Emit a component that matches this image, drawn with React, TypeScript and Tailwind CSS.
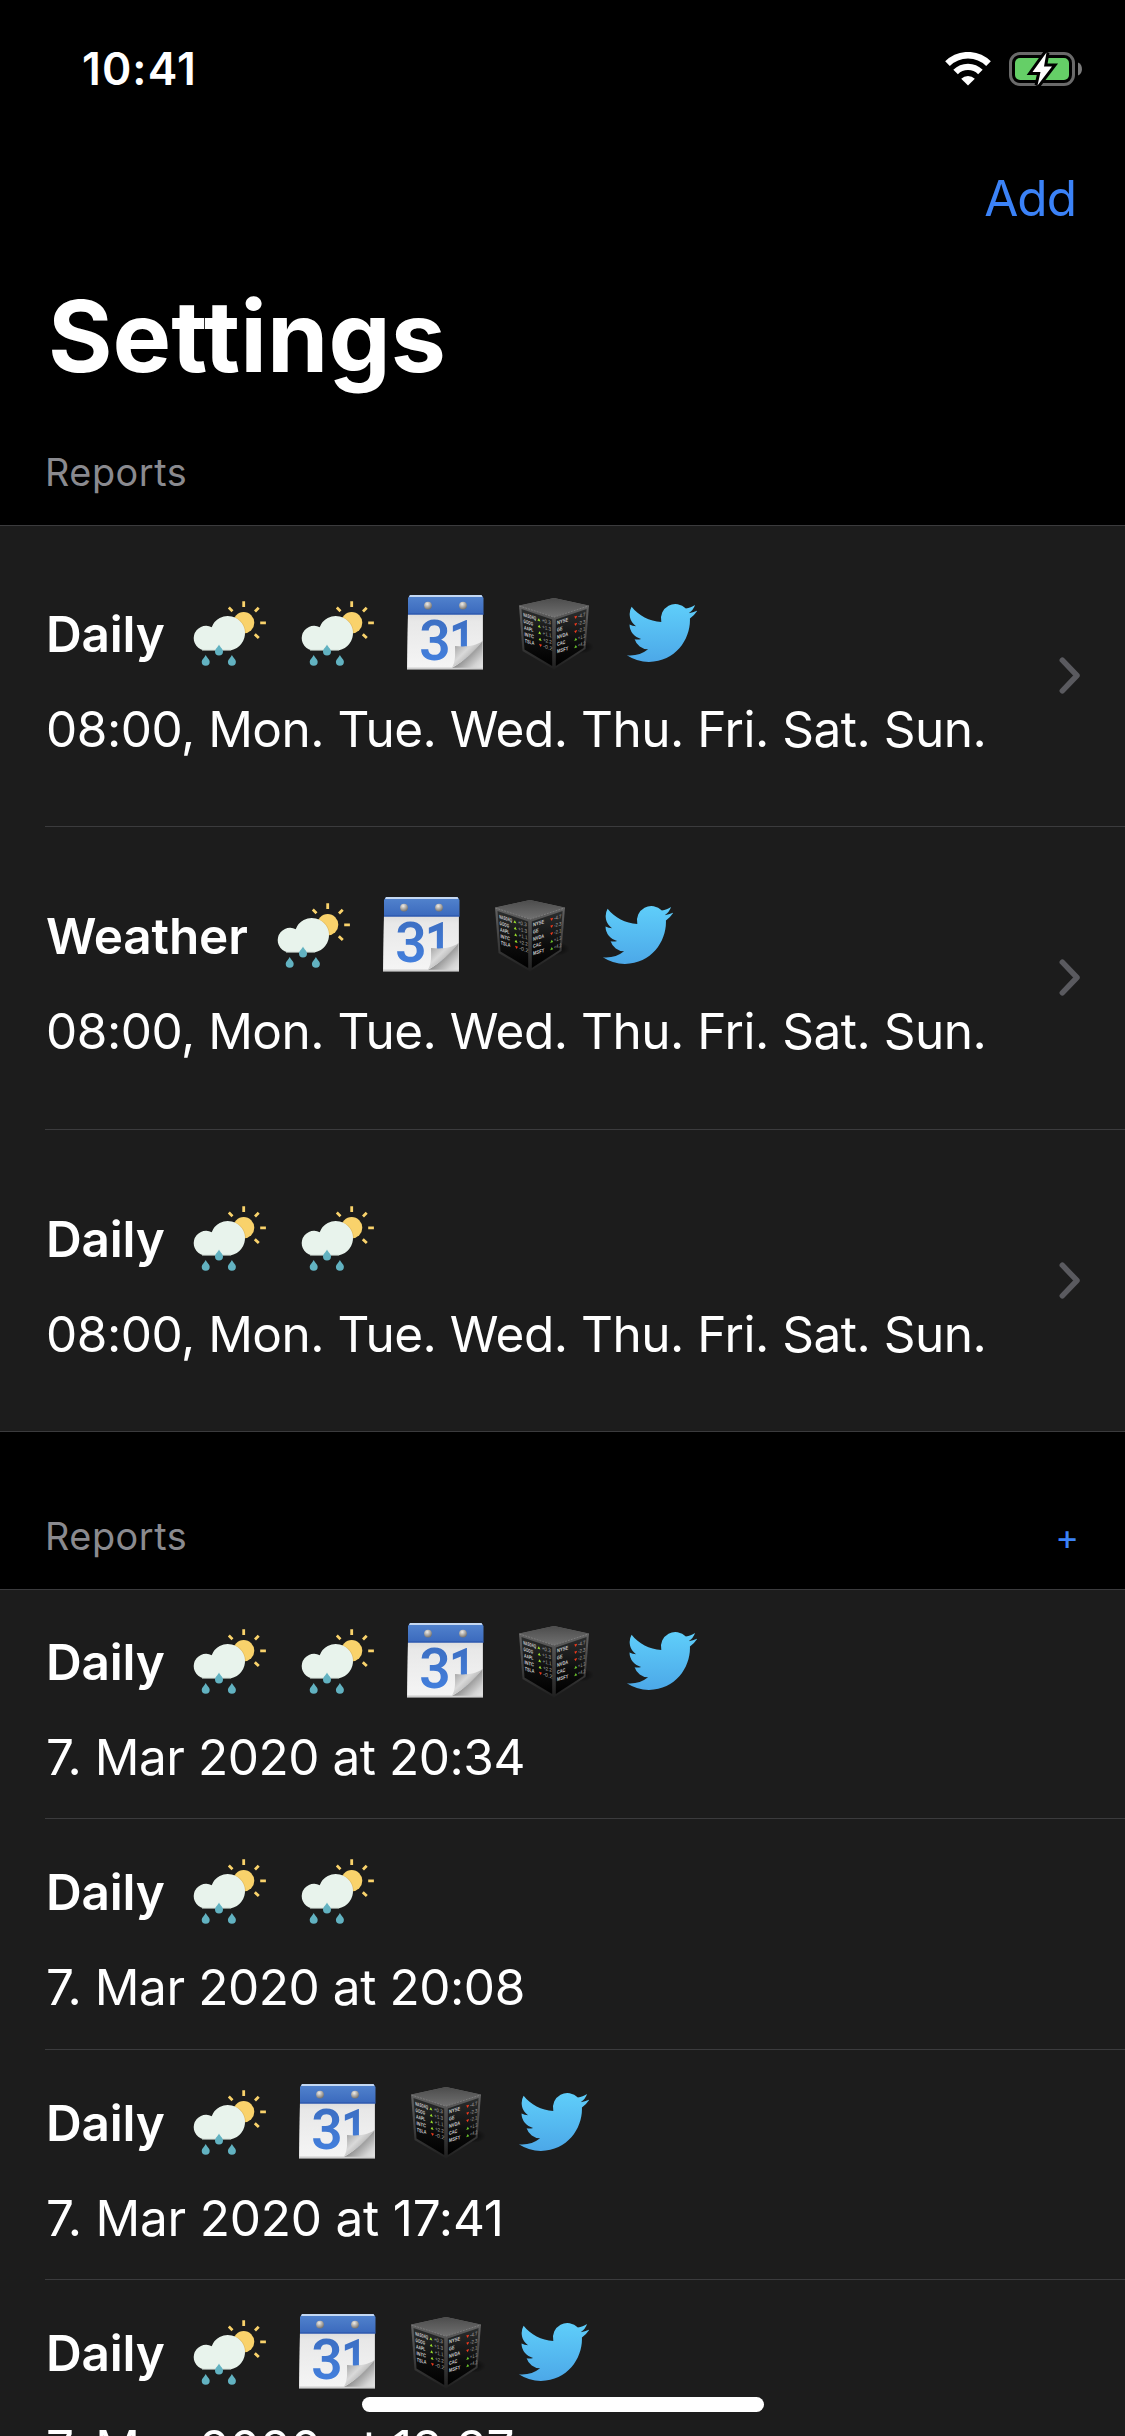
type IconName = 'weather' | 'calendar' | 'stocks' | 'twitter';

type Report = {
  title: string;
  titleClass: string;
  icons: IconName[];
  detail: string;
  detailClass: string;
  heightClass: string;
};

const DAILY = 'w-[119px] tracking-[-0.2px]';
const WEATHER = 'w-[203px] tracking-[-0.2px]';
const SCHEDULE = '08:00, Mon. Tue. Wed. Thu. Fri. Sat. Sun.';

const schedules: Report[] = [
  { title: 'Daily', titleClass: DAILY, icons: ['weather', 'weather', 'calendar', 'stocks', 'twitter'], detail: SCHEDULE, detailClass: 'tracking-[-0.48px]', heightClass: 'h-[302px]' },
  { title: 'Weather', titleClass: WEATHER, icons: ['weather', 'calendar', 'stocks', 'twitter'], detail: SCHEDULE, detailClass: 'tracking-[-0.48px]', heightClass: 'h-[303px]' },
  { title: 'Daily', titleClass: DAILY, icons: ['weather', 'weather'], detail: SCHEDULE, detailClass: 'tracking-[-0.48px]', heightClass: 'h-[302px]' },
];

const history: Report[] = [
  { title: 'Daily', titleClass: DAILY, icons: ['weather', 'weather', 'calendar', 'stocks', 'twitter'], detail: '7. Mar 2020 at 20:34', detailClass: 'tracking-[-0.45px]', heightClass: 'h-[230px]' },
  { title: 'Daily', titleClass: DAILY, icons: ['weather', 'weather'], detail: '7. Mar 2020 at 20:08', detailClass: 'tracking-[-0.42px]', heightClass: 'h-[231px]' },
  { title: 'Daily', titleClass: DAILY, icons: ['weather', 'calendar', 'stocks', 'twitter'], detail: '7. Mar 2020 at 17:41', detailClass: 'tracking-[-0.2px]', heightClass: 'h-[230px]' },
  { title: 'Daily', titleClass: DAILY, icons: ['weather', 'calendar', 'stocks', 'twitter'], detail: '7. Mar 2020 at 18:37', detailClass: 'tracking-[-0.25px]', heightClass: 'h-[230px]' },
];

function WeatherIcon() {
  return (
    <svg width="84" height="84" viewBox="0 0 84 84">
      <clipPath id="sun-disc"><circle cx="55.7" cy="31.7" r="10.6" /></clipPath>
      <circle cx="55.7" cy="31.7" r="10.6" fill="#f9d26b" />
      <path d="M55.7 10.2v5.8M40.8 16.600l3.700 3.600M67 20.400l3.700-3.700M72.200 31.900h5.700M66.800 43.200l4 3.900" stroke="#f9d26b" strokeWidth="2.800" fill="none" />
      <circle cx="39.600" cy="42.800" r="18.300" fill="#e2b95c" clipPath="url(#sun-disc)" />
      <path d="M18 59.400a12.300 12.300 0 1 1 5.700-23.200A17.200 17.200 0 1 1 40 59.400z" fill="#e8f3ec" />
      <path d="M14 59.400h29" stroke="#8b938e" strokeWidth="1" />
      <g fill="#62b2c1">
        <path d="M31 53.600c1 2.600 4 4.300 4 7a4 4 0 0 1-8 0c0-2.700 3-4.400 4-7z" />
        <path d="M17.700 64c1 2.600 4 4.300 4 6.800a4 4 0 0 1-8 0c0-2.500 3-4.200 4-6.800z" />
        <path d="M43.900 64c1 2.600 4 4.300 4 6.800a4 4 0 0 1-8 0c0-2.500 3-4.200 4-6.800z" />
      </g>
    </svg>
  );
}

function CalendarIcon() {
  return (
    <svg width="84" height="84" viewBox="0 0 84 84">
      <defs>
        <linearGradient id="cal-head" x1="0" y1="0" x2="0" y2="1">
          <stop offset="0" stopColor="#5384ce" />
          <stop offset="1" stopColor="#3a69bd" />
        </linearGradient>
        <linearGradient id="cal-page" x1="0" y1="0" x2="0" y2="1">
          <stop offset="0" stopColor="#dcdcdc" />
          <stop offset="0.15" stopColor="#e8e8e8" />
          <stop offset="1" stopColor="#f5f5f5" />
        </linearGradient>
        <linearGradient id="cal-num" x1="0" y1="0" x2="0" y2="1">
          <stop offset="0" stopColor="#3b6bbd" />
          <stop offset="1" stopColor="#4584e4" />
        </linearGradient>
        <linearGradient id="cal-flap" x1="52" y1="54" x2="66" y2="68" gradientUnits="userSpaceOnUse">
          <stop offset="0" stopColor="#a9a9a9" />
          <stop offset="0.55" stopColor="#d9d9d9" />
          <stop offset="0.8" stopColor="#c4c4c4" />
          <stop offset="1" stopColor="#8c8c8c" />
        </linearGradient>
        <linearGradient id="cal-under" x1="62" y1="64" x2="78" y2="80" gradientUnits="userSpaceOnUse">
          <stop offset="0" stopColor="#8f8f8f" />
          <stop offset="0.6" stopColor="#d4d4d4" />
          <stop offset="1" stopColor="#e9e9e9" />
        </linearGradient>
        <radialGradient id="cal-pin" cx="0.4" cy="0.3" r="0.7">
          <stop offset="0" stopColor="#f0eeea" />
          <stop offset="1" stopColor="#77736e" />
        </radialGradient>
      </defs>
      <path d="M4 22h75v56.5H3z" fill="#bdbdbd" />
      <path d="M4 22h74.5v54.8H3.2z" fill="url(#cal-page)" />
      <path d="M6 4h71.5l2 3v16.5H4V7z" fill="url(#cal-head)" />
      <path d="M6 4h71.5l1 2H5z" fill="#c4d8f2" />
      <path d="M4 23h75.6" stroke="#2750a8" strokeWidth="1.2" />
      <circle cx="24" cy="14.6" r="3.9" fill="url(#cal-pin)" />
      <circle cx="59" cy="14.6" r="3.9" fill="url(#cal-pin)" />
      <g fontFamily="Roboto" fontWeight="600" fontSize="55" fill="url(#cal-num)">
        <text transform="translate(15.3 69)">3</text>
        <text transform="translate(45 69) scale(0.85 1)">1</text>
      </g>
      <path d="M78.5 50C70 60 60 70 48 77h30.5z" fill="url(#cal-under)" />
      <path d="M51 55c10 1 20 .5 27.5-5C71 60 61 70 48 76.5c4-6 3-15 3-21.5z" fill="url(#cal-flap)" />
      <path d="M3 77.5h76" stroke="#cfcfcf" strokeWidth="1.5" />
    </svg>
  );
}

const leftQuotes = [
  { name: 'NASDAQ', value: '+0.3', up: true },
  { name: 'GOOG', value: '+1.3', up: true },
  { name: 'AAPL', value: '+1.1', up: true },
  { name: 'INTC', value: '+2.2', up: true },
  { name: 'TSLA', value: '-0.2', up: false },
];

const rightQuotes = [
  { name: 'NYSE', value: '-4.7', up: false },
  { name: 'GE', value: '-2.3', up: false },
  { name: 'NVDA', value: '-2.1', up: false },
  { name: 'CAC', value: '+1.3', up: true },
  { name: 'MSFT', value: '+4.2', up: true },
];

function StocksIcon() {
  return (
    <svg width="84" height="84" viewBox="0 0 84 84">
      <defs>
        <linearGradient id="cube-top" x1="0" y1="0" x2="0" y2="1">
          <stop offset="0" stopColor="#4c4c4c" />
          <stop offset="1" stopColor="#707070" />
        </linearGradient>
        <linearGradient id="cube-frame" x1="0" y1="0" x2="0" y2="1">
          <stop offset="0" stopColor="#6a6a6a" />
          <stop offset="1" stopColor="#1f1f1f" />
        </linearGradient>
        <linearGradient id="cube-face" x1="0" y1="0" x2="0" y2="1">
          <stop offset="0" stopColor="#2c2e2e" />
          <stop offset="0.6" stopColor="#0c0c0c" />
          <stop offset="1" stopColor="#000" />
        </linearGradient>
        <radialGradient id="cube-shadow">
          <stop offset="0" stopColor="#000" stopOpacity="0.8" />
          <stop offset="1" stopColor="#000" stopOpacity="0" />
        </radialGradient>
      </defs>
      <ellipse cx="68" cy="56" rx="14" ry="7" fill="url(#cube-shadow)" />
      <path d="M7 14.5L42 7l35 7.5L73.5 58 42 78.5 10.5 60z" fill="url(#cube-frame)" />
      <path d="M8 14.5L42 7l34 7.500L42 26z" fill="url(#cube-top)" />
      <path d="M7.500 15L42 26.200 76.500 15" stroke="#8a8a8a" strokeWidth="0.7" fill="none" strokeDasharray="2 1" />
      <path d="M9.500 18L40.200 28.500V75L12.500 58.500z" fill="url(#cube-face)" />
      <path d="M43.800 28.500L74.600 18 71.600 57 43.800 75z" fill="url(#cube-face)" />
      <g fontFamily="Liberation Sans" fontSize="5.2" fill="#d2d2d2">
        {leftQuotes.map((q, i) => (
          <g key={q.name} transform={`matrix(1 0.3 0 1 ${11.2 + i * 0.4} ${25.3 + i * 6.5})`}>
            <text x="0" y="0" fontWeight="700" textLength={i === 0 ? 13 : 9.5} lengthAdjust="spacingAndGlyphs">{q.name}</text>
            <path d={q.up ? 'M14.2 0l1.5-2.800 1.500 2.800z' : 'M14.200-2.800l1.500 2.800 1.500-2.800z'} fill={q.up ? '#9be02c' : '#f03a1c'} />
            <text x="18.500" y="0" textLength="9" lengthAdjust="spacingAndGlyphs" fill="#a3a3a3">{q.value}</text>
          </g>
        ))}
        {rightQuotes.map((q, i) => (
          <g key={q.name} transform={`matrix(1 -0.3 0 1 45 ${33.5 + i * 7.2})`}>
            <text x="0" y="0" fontWeight="700" textLength={q.name.length * 2.8} lengthAdjust="spacingAndGlyphs">{q.name}</text>
            <path d={q.up ? 'M17.200 0l1.500-2.800 1.500 2.800z' : 'M17.200-2.800l1.500 2.800 1.500-2.800z'} fill={q.up ? '#6cc62c' : '#f03a1c'} />
            <text x="21" y="0" textLength="7.500" lengthAdjust="spacingAndGlyphs" fill="#a3a3a3">{q.value}</text>
          </g>
        ))}
      </g>
    </svg>
  );
}

function TwitterIcon() {
  return (
    <svg width="84" height="84" viewBox="0 0 84 84">
      <defs>
        <linearGradient id="bird" x1="0" y1="0" x2="0" y2="1">
          <stop offset="0" stopColor="#5fcefa" />
          <stop offset="1" stopColor="#4ca8e8" />
        </linearGradient>
      </defs>
      <path
        transform="translate(6.800 6.300) scale(2.930 2.970)"
        fill="url(#bird)"
        d="M23.953 4.57a10 10 0 01-2.825.775 4.958 4.958 0 002.163-2.723c-.951.555-2.005.959-3.127 1.184a4.92 4.92 0 00-8.384 4.482C7.69 8.095 4.067 6.13 1.64 3.162a4.822 4.822 0 00-.666 2.475c0 1.71.87 3.213 2.188 4.096a4.904 4.904 0 01-2.228-.616v.06a4.923 4.923 0 003.946 4.827 4.996 4.996 0 01-2.212.085 4.936 4.936 0 004.604 3.417 9.867 9.867 0 01-6.102 2.105c-.39 0-.779-.023-1.17-.067a13.995 13.995 0 007.557 2.209c9.053 0 13.998-7.496 13.998-13.985 0-.21 0-.42-.015-.63A9.935 9.935 0 0024 4.59z"
      />
    </svg>
  );
}

function ServiceIcon({ name }: { name: IconName }) {
  if (name === 'weather') return <WeatherIcon />;
  if (name === 'calendar') return <CalendarIcon />;
  if (name === 'stocks') return <StocksIcon />;
  return <TwitterIcon />;
}

function Chevron() {
  return (
    <svg className="self-center" width="24" height="38" viewBox="0 0 24 38" fill="none">
      <path d="M4.300 3.200L19 18.500 4.300 33.800" stroke="#5a5a5f" strokeWidth="5.500" strokeLinecap="round" strokeLinejoin="round" />
    </svg>
  );
}

function ReportRow({ report, last, roomy }: { report: Report; last: boolean; roomy: boolean }) {
  return (
    <div className={`flex shrink-0 pl-[45px] ${report.heightClass}`}>
      <div className={`flex flex-1 items-start justify-between pr-[43px] ${last ? '' : 'border-b border-[#3b3b3d]'}`}>
        <div className={`flex flex-col gap-6 ${roomy ? 'pt-[66px]' : 'pt-[30px]'}`}>
          <div className="flex h-[84px] items-center gap-6">
            <span className={`pt-px pl-px text-[49.500px] leading-[84px] font-semibold whitespace-nowrap ${report.titleClass}`}>{report.title}</span>
            {report.icons.map((name, i) => (
              <ServiceIcon key={i} name={name} />
            ))}
          </div>
          <p className={`pl-px text-[49.500px] leading-[61px] whitespace-nowrap ${report.detailClass}`}>{report.detail}</p>
        </div>
        {roomy && <Chevron />}
      </div>
    </div>
  );
}

function StatusBar() {
  return (
    <div className="flex h-[138px] shrink-0 items-center justify-between pr-[42px] pl-[82px]">
      <span className="text-[44.500px] leading-none font-semibold tracking-[1.100px]">10:41</span>
      <div className="flex items-center gap-[18px]">
        <svg width="46" height="34" viewBox="0 0 46 34" fill="none">
          <path d="M2.500 11.700a29 29 0 0 1 41 0" stroke="#fff" strokeWidth="6.600" />
          <path d="M10.600 20a17.500 17.500 0 0 1 24.800 0" stroke="#fff" strokeWidth="6.400" />
          <path d="M23 33.500l-6.800-6.800a9.700 9.700 0 0 1 13.600 0z" fill="#fff" />
        </svg>
        <svg width="74" height="36" viewBox="0 0 74 36">
          <rect x="1.500" y="2.500" width="63" height="31" rx="9.500" fill="none" stroke="#6a6a6a" strokeWidth="3" />
          <path d="M69 11.500c5.300 2 5.300 11 0 13z" fill="#7b7b7b" />
          <rect x="6" y="7" width="54" height="22" rx="5" fill="#65cf67" />
          <path d="M37.500 1.500L23.500 21h8L28.500 34.500 43 15.500h-8z" fill="#fff" stroke="#000" strokeWidth="6" paintOrder="stroke" />
        </svg>
      </div>
    </div>
  );
}

export default function App() {
  return (
    <div className="relative flex h-[2436px] w-[1125px] flex-col overflow-hidden bg-black font-['Inter',sans-serif] text-white">
      <StatusBar />
      <div className="flex h-[122px] shrink-0 items-center justify-end pr-[49px]">
        <button className="text-[49.500px] leading-none tracking-[-1px] text-[#3b82f7]">Add</button>
      </div>
      <div className="flex h-[152px] shrink-0 items-center pt-[2px] pl-[48px]">
        <h1 className="text-[98.500px] leading-none font-bold tracking-[0.100px]">Settings</h1>
      </div>
      <div className="flex h-[113px] shrink-0 items-center pt-[8px] pl-[45px]">
        <h2 className="text-[37.800px] leading-none tracking-[0.550px] text-[#8a8a8f]">Reports</h2>
      </div>
      <section className="flex h-[907px] shrink-0 flex-col border-y border-[#3b3b3d] bg-[#1c1c1c]">
        <div className="-my-px flex flex-col">
          {schedules.map((r, i) => (
            <ReportRow key={i} report={r} last={i === schedules.length - 1} roomy />
          ))}
        </div>
      </section>
      <div className="flex h-[157px] shrink-0 items-center justify-between pt-[52px] pr-[46px] pl-[45px]">
        <h2 className="text-[37.800px] leading-none tracking-[0.550px] text-[#8a8a8f]">Reports</h2>
        <button className="text-[36px] leading-none text-[#3b82f7]">+</button>
      </div>
      <section className="flex flex-1 flex-col border-t border-[#3b3b3d] bg-[#1c1c1c]">
        <div className="-mt-px flex flex-col">
          {history.map((r, i) => (
            <ReportRow key={i} report={r} last={i === history.length - 1} roomy={false} />
          ))}
        </div>
      </section>
      <div className="absolute bottom-[24px] left-[362px] h-[15px] w-[402px] rounded-full bg-white" />
    </div>
  );
}
